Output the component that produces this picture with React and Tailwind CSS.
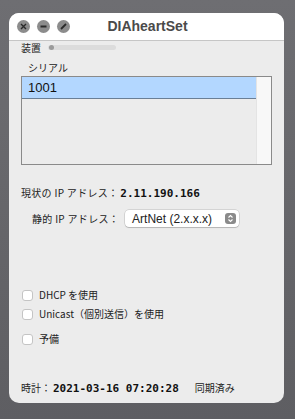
import React from "react";

const jp = { fontFamily: '"Noto Sans CJK JP", "Liberation Sans", sans-serif' };
const mono = { fontFamily: '"DejaVu Sans Mono", monospace' };
const sans = { fontFamily: '"Liberation Sans", sans-serif' };

function Light({ children }) {
  return (
    <div className="w-[13px] h-[13px] rounded-full bg-[#8c8c8c] flex items-center justify-center">
      <svg width="9" height="9" viewBox="0 0 9 9">{children}</svg>
    </div>
  );
}

function Check({ label }) {
  return (
    <div className="flex items-center gap-[6px] h-[12px]">
      <div className="w-[11px] h-[11px] rounded-[3px] bg-white border border-[#c4c4c4]" />
      <span className="text-[10px] text-[#222] leading-none" style={jp}>{label}</span>
    </div>
  );
}

export default function App() {
  return (
    <div className="w-[295px] h-[419px] bg-gradient-to-b from-[#6e6e72] to-[#5e5e62] pl-[9px] pt-[13px]" style={jp}>
      <div className="w-[275px] h-[390px] rounded-[10px] overflow-hidden flex flex-col bg-[#ececec]">
        <div className="h-[28px] bg-white border-b border-[#c6c6c6] flex items-center relative shrink-0">
          <div className="flex gap-[7px] pl-[8px]">
            <Light>
              <path d="M2 2 L7 7 M7 2 L2 7" stroke="#2a2a2a" strokeWidth="1.4" />
            </Light>
            <Light>
              <path d="M1.5 4.5 H7.5" stroke="#2a2a2a" strokeWidth="1.8" />
            </Light>
            <Light>
              <path d="M2 7 L7 2" stroke="#2a2a2a" strokeWidth="1.8" />
            </Light>
          </div>
          <div className="absolute inset-0 flex items-center justify-center pointer-events-none">
            <span className="text-[14px] font-bold text-[#4a4a4a] pl-[2px]" style={sans}>DIAheartSet</span>
          </div>
        </div>
        <div className="flex-1 px-[12px] flex flex-col">
          <div className="flex items-center h-[13px]">
            <span className="text-[10px] text-[#222] leading-none">装置</span>
            <div className="ml-[7px] w-[68px] h-[5px] rounded-full bg-[#dcdcdc] flex items-center">
              <div className="w-[5px] h-[5px] rounded-full bg-[#9a9a9a] ml-[1px]" />
            </div>
          </div>
          <div className="pl-[7px] mt-[8px] h-[12px] flex items-center">
            <span className="text-[10px] text-[#222] leading-none">シリアル</span>
          </div>
          <div className="mt-[2px] w-[251px] h-[89px] border border-[#8a8a8a] bg-[#ececec] flex">
            <div className="flex-1">
              <div className="h-[22px] bg-[#b3d7ff] border-b border-[#6a7f96] flex items-center pl-[6px]">
                <span className="text-[13px] text-[#111]" style={sans}>1001</span>
              </div>
            </div>
            <div className="w-[15px] bg-[#f8f8f8] border-l border-[#e4e4e4]" />
          </div>
          <div className="mt-[22px] flex items-center h-[12px]">
            <span className="text-[10px] text-[#222] leading-none tracking-[0.3px]">現状の IP アドレス：</span>
            <span className="ml-[2px] text-[11px] font-bold text-[#111] leading-none" style={mono}>2.11.190.166</span>
          </div>
          <div className="mt-[11px] flex items-center pl-[11px]">
            <span className="text-[10px] text-[#222] leading-none tracking-[0.3px]">静的 IP アドレス：</span>
            <div className="ml-[6px] w-[114px] h-[17px] bg-white rounded-[4px] shadow-[0_0_0_0.5px_rgba(0,0,0,0.2),0_1px_1px_rgba(0,0,0,0.15)] flex items-center pl-[7px] pr-[3px]">
              <span className="flex-1 text-[12px] text-[#222]" style={sans}>ArtNet (2.x.x.x)</span>
              <div className="w-[11px] h-[11px] rounded-[3px] bg-[#8a8a8a] flex items-center justify-center">
                <svg width="7" height="9" viewBox="0 0 7 9">
                  <path d="M1.5 3.5 L3.5 1.5 L5.5 3.5 M1.5 5.5 L3.5 7.5 L5.5 5.5" stroke="white" strokeWidth="1.1" fill="none" />
                </svg>
              </div>
            </div>
          </div>
          <div className="mt-[62px] pl-[1px] flex flex-col">
            <Check label="DHCP を使用" />
            <div className="mt-[7px]"><Check label="Unicast（個別送信）を使用" /></div>
            <div className="mt-[13px]"><Check label="予備" /></div>
          </div>
          <div className="mt-[37px] flex items-center h-[12px]">
            <span className="text-[10px] text-[#222] leading-none">時計：</span>
            <span className="ml-[2px] text-[11px] font-bold text-[#111] leading-none" style={mono}>2021-03-16 07:20:28</span>
            <span className="ml-[16px] text-[10px] text-[#222] leading-none">同期済み</span>
          </div>
        </div>
      </div>
    </div>
  );
}
